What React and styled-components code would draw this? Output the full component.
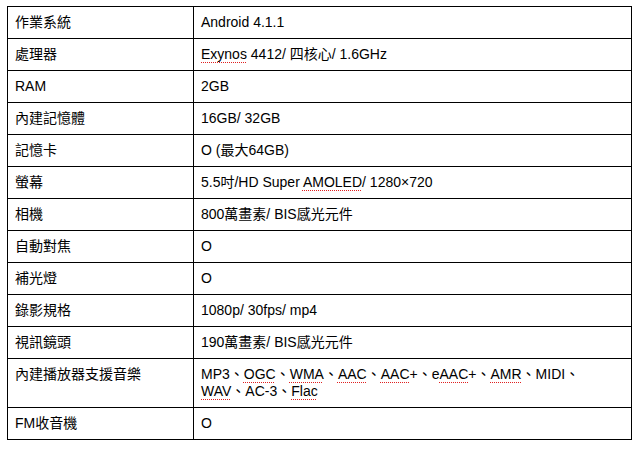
import React from "react";
import styled, { createGlobalStyle } from "styled-components";

const GlobalStyle = createGlobalStyle`
  html, body {
    margin: 0;
    padding: 0;
    background: #fff;
  }
`;

const Page = styled.div`
  padding: 6px 0 0 7px;
  font-family: "Liberation Sans", Arial, "Noto Sans CJK TC", sans-serif;
  font-size: 14px;
  color: #000;
`;

const SpecTable = styled.table`
  border-collapse: collapse;
  width: 625px;
  table-layout: fixed;
`;

const Cell = styled.td`
  border: 1px solid #000;
  padding: 7px 7px;
  line-height: 17px;
  vertical-align: top;
  width: ${(props) => (props.label ? "171px" : "auto")};
  white-space: nowrap;
`;

const Typo = styled.span`
  text-decoration: underline dotted #e02020;
  text-decoration-thickness: 1px;
  text-underline-offset: 3px;
`;

const specs = [
  ["作業系統", "Android 4.1.1"],
  [
    "處理器",
    <>
      <Typo>Exynos</Typo> 4412/ 四核心/ 1.6GHz
    </>,
  ],
  ["RAM", "2GB"],
  ["內建記憶體", "16GB/ 32GB"],
  ["記憶卡", "O (最大64GB)"],
  [
    "螢幕",
    <>
      5.5吋/HD Super <Typo>AMOLED</Typo>/ 1280×720
    </>,
  ],
  ["相機", "800萬畫素/ BIS感光元件"],
  ["自動對焦", "O"],
  ["補光燈", "O"],
  ["錄影規格", "1080p/ 30fps/ mp4"],
  ["視訊鏡頭", "190萬畫素/ BIS感光元件"],
  [
    "內建播放器支援音樂",
    <>
      MP3、<Typo>OGC</Typo>、<Typo>WMA</Typo>、<Typo>AAC</Typo>、
      <Typo>AAC</Typo>+、e<Typo>AAC</Typo>+、<Typo>AMR</Typo>、MIDI、
      <br />
      <Typo>WAV</Typo>、AC-3、<Typo>Flac</Typo>
    </>,
  ],
  ["FM收音機", "O"],
];

export default function App() {
  return (
    <Page>
      <GlobalStyle />
      <SpecTable>
        <tbody>
          {specs.map(([name, value], i) => (
            <tr key={i}>
              <Cell label>{name}</Cell>
              <Cell>{value}</Cell>
            </tr>
          ))}
        </tbody>
      </SpecTable>
    </Page>
  );
}
